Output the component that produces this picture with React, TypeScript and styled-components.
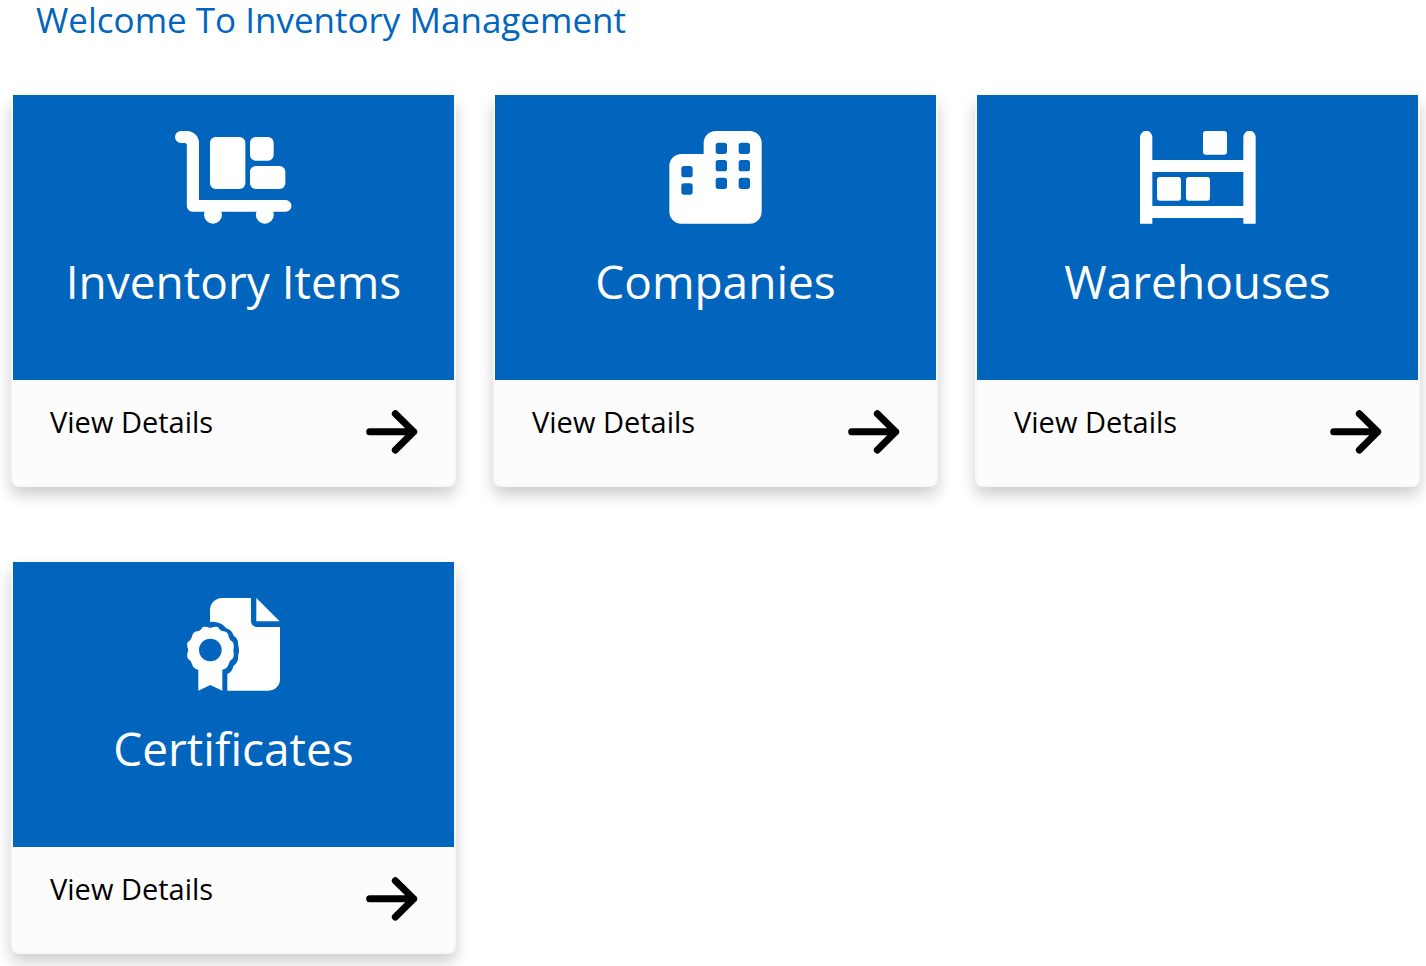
import React from 'react';
import styled, { createGlobalStyle } from 'styled-components';

const GlobalStyle = createGlobalStyle`
  *, *::before, *::after { box-sizing: border-box; }
  body {
    margin: 0;
    background: #fff;
    color: #000;
    font-family: "Segoe UI", "Open Sans", "Noto Sans", sans-serif;
  }
`;

const Page = styled.main`
  padding: 0 6px 12px 11px;
`;

const Heading = styled.h1`
  margin: 0 0 55px;
  padding-left: 25px;
  font-size: 35px;
  line-height: 40px;
  font-weight: 400;
  color: #0265bd;
`;

const CardGrid = styled.div`
  display: grid;
  grid-template-columns: repeat(3, minmax(0, 1fr));
  gap: 75px 37px;
`;

const Card = styled.article`
  display: flex;
  flex-direction: column;
  border: 2px solid #f7f7fa;
  border-top: 0;
  border-radius: 8px;
  background: #fcfcfc;
  box-shadow: 0 8px 16px rgba(0, 0, 0, 0.2);
`;

const CardBanner = styled.div`
  display: flex;
  flex-direction: column;
  align-items: center;
  gap: 24px;
  padding: 36px 16px 66px;
  background: #0265bd;
  color: #fff;
`;

const CardTitle = styled.h2`
  margin: 0;
  font-size: 46px;
  line-height: 66px;
  font-weight: 400;
  white-space: nowrap;
`;

const CardLink = styled.a`
  display: flex;
  justify-content: space-between;
  align-items: flex-start;
  padding: 22px 35px 30px 37px;
  color: inherit;
  text-decoration: none;
  font-size: 29px;
  line-height: 40px;
`;

const Picture = styled.svg`
  display: block;
  height: 93px;
  fill: currentColor;
`;

const Arrow = styled.svg`
  display: block;
  width: 54px;
  height: 46px;
  margin-top: 7px;
  fill: none;
  stroke: currentColor;
  stroke-width: 21;
  stroke-linecap: round;
  stroke-linejoin: round;
`;

const CartIcon = () => (
  <Picture viewBox="46 63 349 279" aria-hidden="true">
    <path d="M64 63H82A36 36 0 0 1 118 99V270H378A17.500 17.500 0 0 1 378 305H98A16.500 16.500 0 0 1 81.500 289V104Q81.500 99 76 99H64A18 18 0 0 1 64 63Z" />
    <circle cx="160" cy="314" r="27" />
    <circle cx="315.500" cy="314" r="27" />
    <rect x="151" y="81" width="106" height="156" rx="17" />
    <rect x="271" y="81" width="71" height="71" rx="17" />
    <rect x="271" y="168" width="106" height="69" rx="17" />
  </Picture>
);

const BuildingIcon = () => (
  <Picture viewBox="57 63 279 279" aria-hidden="true">
    <path
      fillRule="evenodd"
      d="M161 132V99A36 36 0 0 1 197 63H299A36 36 0 0 1 335 99V305A36 36 0 0 1 299 341H94A36 36 0 0 1 58 305V168A36 36 0 0 1 94 132ZM205 98a8 8 0 0 0-8 8v18a8 8 0 0 0 8 8h18a8 8 0 0 0 8-8v-18a8 8 0 0 0-8-8zM274 98a8 8 0 0 0-8 8v18a8 8 0 0 0 8 8h18a8 8 0 0 0 8-8v-18a8 8 0 0 0-8-8zM205 150a8 8 0 0 0-8 8v18a8 8 0 0 0 8 8h18a8 8 0 0 0 8-8v-18a8 8 0 0 0-8-8zM274 150a8 8 0 0 0-8 8v18a8 8 0 0 0 8 8h18a8 8 0 0 0 8-8v-18a8 8 0 0 0-8-8zM205 203a8 8 0 0 0-8 8v18a8 8 0 0 0 8 8h18a8 8 0 0 0 8-8v-18a8 8 0 0 0-8-8zM274 203a8 8 0 0 0-8 8v18a8 8 0 0 0 8 8h18a8 8 0 0 0 8-8v-18a8 8 0 0 0-8-8zM102 168a8 8 0 0 0-8 8v18a8 8 0 0 0 8 8h18a8 8 0 0 0 8-8v-18a8 8 0 0 0-8-8zM102 220a8 8 0 0 0-8 8v18a8 8 0 0 0 8 8h18a8 8 0 0 0 8-8v-18a8 8 0 0 0-8-8z"
    />
  </Picture>
);

const ShelfIcon = () => (
  <Picture viewBox="60 63 348 279" aria-hidden="true">
    <path
      fillRule="evenodd"
      d="M60 341V81A18.500 18.500 0 0 1 97 81V150H370V81A18.500 18.500 0 0 1 407 81V341H370V324H97V341ZM97 186V288H370V186Z"
    />
    <rect x="249" y="63" width="72" height="71" rx="9" />
    <rect x="111" y="201" width="72" height="71" rx="9" />
    <rect x="198" y="201" width="72" height="71" rx="9" />
  </Picture>
);

const CertificateIcon = () => (
  <Picture viewBox="51 54 279 279" aria-hidden="true">
    <path d="M259 54L329 124H259Z" />
    <path d="M120 126V90A36 36 0 0 1 156 54H243V124A17 17 0 0 0 260 141H330V298A34 34 0 0 1 296 332H172V282Q187 276 190 258Q207 246 204 228Q210 211 204 193Q206 176 191 167Q185 149 169 145Q156 129 139 127Q130 124 120 126Z" />
    <path
      fillRule="evenodd"
      d="M121 144Q135 138 144 141Q150 153 161 154Q174 155 176 170Q178 180 189 187Q193 195 190 211Q193 226 189 235Q178 242 176 252Q173 266 157 269V332L121 315L85 332V269Q69 266 66 252Q63 242 53 235Q49 226 55 211Q49 195 53 187Q63 180 66 170Q69 155 81 154Q92 153 98 141Q107 138 121 144ZM121 176A34 34 0 1 0 121 244A34 34 0 1 0 121 176Z"
    />
  </Picture>
);

const cards = [
  { title: 'Inventory Items', href: '#inventory-items', Icon: CartIcon },
  { title: 'Companies', href: '#companies', Icon: BuildingIcon },
  { title: 'Warehouses', href: '#warehouses', Icon: ShelfIcon },
  { title: 'Certificates', href: '#certificates', Icon: CertificateIcon },
];

export default function App() {
  return (
    <>
      <GlobalStyle />
      <Page>
        <Heading>Welcome To Inventory Management</Heading>
        <CardGrid>
          {cards.map(({ title, href, Icon }) => (
            <Card key={title}>
              <CardBanner>
                <Icon />
                <CardTitle>{title}</CardTitle>
              </CardBanner>
              <CardLink href={href}>
                View Details
                <Arrow viewBox="76 117 162 138" aria-hidden="true">
                  <path d="M90 185H222M167 131L222 185L167 240" />
                </Arrow>
              </CardLink>
            </Card>
          ))}
        </CardGrid>
      </Page>
    </>
  );
}
